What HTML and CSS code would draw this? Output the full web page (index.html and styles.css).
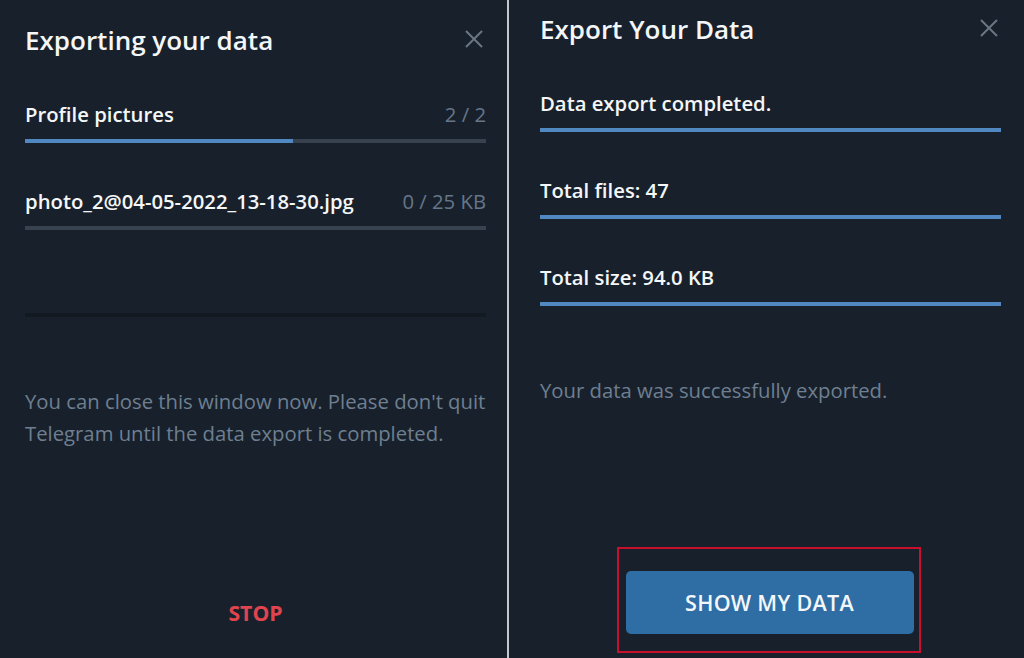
FILE: index.html
```html
<!DOCTYPE html>
<html lang="en">
<head>
    <meta charset="UTF-8">
    <meta name="viewport" content="width=device-width, initial-scale=1.0">
    <title>Export Your Data</title>
    <link rel="stylesheet" href="styles.css">
</head>
<body>

    <div class="screen">

        <!-- export in progress -->
        <section class="box box-progress">
            <header class="box-head">
                <h1>Exporting your data</h1>
                <button class="close" aria-label="Close">
                    <svg viewBox="0 0 18 18" width="18" height="18"><path d="M1 1L17 17M17 1L1 17"/></svg>
                </button>
            </header>

            <div class="item">
                <div class="item-row">
                    <span class="item-label">Profile pictures</span>
                    <span class="item-count">2 / 2</span>
                </div>
                <div class="bar"><div class="bar-fill" style="width: 58.1%"></div></div>
            </div>

            <div class="item">
                <div class="item-row">
                    <span class="item-label">photo_2@04-05-2022_13-18-30.jpg</span>
                    <span class="item-count">0 / 25 KB</span>
                </div>
                <div class="bar"></div>
            </div>

            <div class="item">
                <div class="item-row"></div>
                <div class="bar bar-empty"></div>
            </div>

            <p class="about">You can close this window now. Please don't quit Telegram until the data export is completed.</p>

            <footer class="box-foot">
                <button class="stop">STOP</button>
            </footer>
        </section>

        <!-- export finished -->
        <section class="box box-done">
            <header class="box-head">
                <h1>Export Your Data</h1>
                <button class="close" aria-label="Close">
                    <svg viewBox="0 0 18 18" width="18" height="18"><path d="M1 1L17 17M17 1L1 17"/></svg>
                </button>
            </header>

            <div class="item">
                <div class="item-row"><span class="item-label">Data export completed.</span></div>
                <div class="bar"><div class="bar-fill" style="width: 100%"></div></div>
            </div>

            <div class="item">
                <div class="item-row"><span class="item-label">Total files: 47</span></div>
                <div class="bar"><div class="bar-fill" style="width: 100%"></div></div>
            </div>

            <div class="item">
                <div class="item-row"><span class="item-label">Total size: 94.0 KB</span></div>
                <div class="bar"><div class="bar-fill" style="width: 100%"></div></div>
            </div>

            <p class="about">Your data was successfully exported.</p>

            <footer class="box-foot">
                <div class="highlight">
                    <button class="show-btn">SHOW MY DATA</button>
                </div>
            </footer>
        </section>

    </div>

</body>
</html>
```

FILE: styles.css
```css
* { margin: 0; padding: 0; box-sizing: border-box; }
body { background: #18212b; color: #f4f6f8; font-family: 'Open Sans', 'Noto Sans', sans-serif; }
button { font-family: inherit; background: none; border: none; cursor: pointer; }

.screen { display: flex; height: 100vh; }

.box { display: flex; flex-direction: column; height: 658px; }
.box-progress { width: 509px; padding: 23px 21px 31px 25px; border-right: 2px solid #c4c7ca; }
.box-done { flex: 1; padding: 12px 23px 5px 31px; }

.box-head { display: flex; justify-content: space-between; align-items: flex-start; margin-bottom: -1px; }
.box-head h1 { font-size: 26px; font-weight: 600; line-height: 34px; }
.close { margin: 7px 3px 0 0; width: 18px; height: 18px; display: flex; }
.close svg { stroke: #6a7684; stroke-width: 2; fill: none; }

.item { margin-top: 44px; }
.item-row { display: flex; justify-content: space-between; height: 28px; line-height: 28px; font-size: 20.3px; }
.item-label { font-weight: 600; }
.item-count { color: #66768a; }
.bar { height: 4px; margin-top: 11px; background: #37424e; }
.bar-fill { height: 100%; background: #5288c1; }
.bar-empty { background: #121920; }

.about { margin-top: 68px; font-size: 20.3px; line-height: 32px; color: #6e7f91; }

.box-foot { margin-top: auto; display: flex; justify-content: center; }
.stop { font-size: 21.2px; line-height: 28px; font-weight: 700; color: #e0444f; }

.highlight { margin-left: -4px; border: 2px solid #c8102e; padding: 22px 5px 17px 7px; }
.show-btn { width: 288px; height: 63px; background: #2f6ea5; color: #f4f7fa; border-radius: 5px; font-size: 21.5px; font-weight: 600; letter-spacing: 0.3px; }
```
